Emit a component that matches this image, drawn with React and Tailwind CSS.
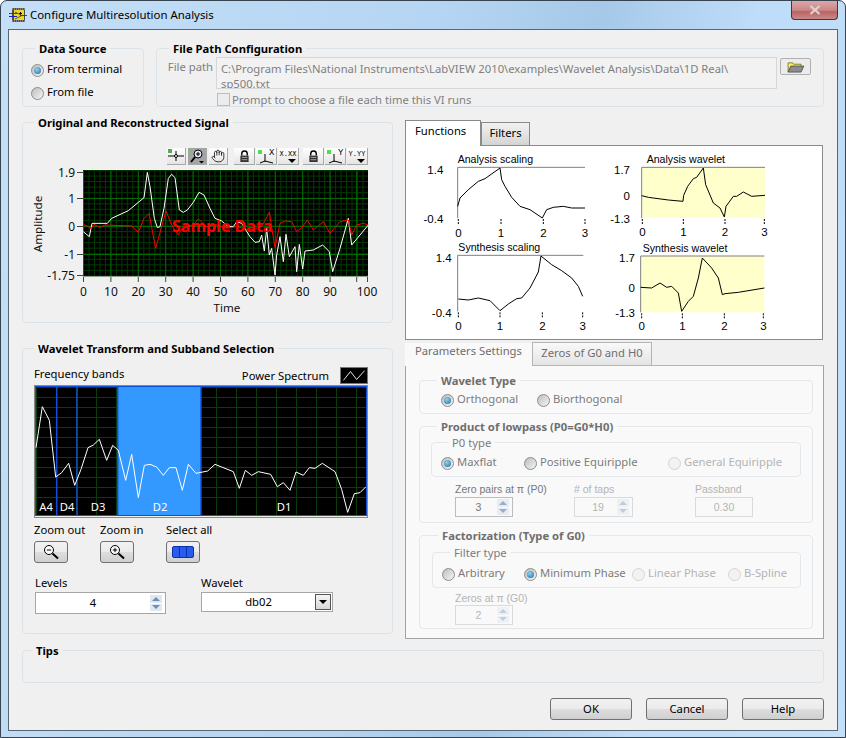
import React from 'react';
import { Hand } from 'lucide-react';

// points were read off the screenshot at 3x, so map them back to page pixels
const mapPts = (ox, oy, arr) => arr.map(([x, y]) => `${ox + x / 3},${oy + y / 3}`).join(' ');

const whiteSig = [[190,350],[208,365],[216,325],[262,325],[275,310],[325,287],[355,262],[372,248],[382,172],[390,215],[403,310],[412,338],[420,335],[432,280],[445,190],[455,178],[465,188],[478,285],[490,292],[502,285],[520,262],[537,232],[552,240],[570,280],[585,310],[605,318],[625,335],[640,335],[650,320],[665,325],[690,365],[705,382],[718,380],[725,360],[733,408],[740,340],[748,420],[755,400],[765,480],[770,420],[780,365],[790,440],[798,358],[808,425],[825,395],[830,470],[838,388],[848,462],[855,408],[880,405],[908,390],[928,410],[938,470],[960,400],[985,310],[995,390],[1045,330]];
const redSig = [[190,328],[205,335],[212,342],[222,328],[240,338],[255,330],[335,333],[355,352],[372,310],[387,295],[407,400],[438,288],[455,330],[475,360],[490,335],[520,330],[535,312],[560,335],[585,328],[620,340],[650,335],[690,345],[725,335],[748,292],[765,398],[780,325],[795,318],[815,320],[830,350],[845,338],[862,315],[880,345],[910,320],[930,355],[960,320],[985,315],[995,360],[1010,330],[1030,325],[1045,330]];
const spectrum = [[48,320],[67,197],[88,238],[107,408],[125,395],[146,367],[164,433],[183,385],[204,320],[220,312],[238,295],[260,358],[278,313],[295,328],[317,418],[335,340],[355,470],[373,373],[390,370],[410,378],[430,403],[448,380],[468,380],[487,448],[505,370],[528,397],[563,390],[585,370],[605,378],[640,392],[658,442],[676,388],[695,403],[715,392],[752,400],[772,437],[790,425],[810,448],[828,393],[850,403],[868,380],[885,382],[907,367],[945,392],[965,445],[983,514],[1003,458],[1020,455],[1037,438]];

const miniCharts = [
  { title: 'Analysis scaling', tx: 158, ty: 123, vx: 406, vy: 146, px: [158, 540], py: [148, 300], fill: 'none', yEnd: 115, yl: [['1.4', 153], ['-0.4', 302]], xl: [160, 288, 415, 540], xly: 343,
    curve: [[158,265],[165,240],[190,215],[220,190],[240,182],[285,150],[290,185],[300,205],[320,238],[345,265],[375,275],[412,300],[425,275],[445,268],[475,265],[500,270],[540,270]] },
  { title: 'Analysis wavelet', tx: 725, ty: 123, vx: 614, vy: 146, px: [710, 1080], py: [148, 300], fill: '#ffffcc', yEnd: 675, yl: [['1.7', 153], ['0', 233], ['-1.3', 302]], xl: [712, 835, 960, 1078], xly: 340,
    curve: [[710,233],[730,238],[790,246],[834,250],[836,232],[848,205],[865,182],[875,178],[895,150],[902,200],[925,255],[945,270],[958,297],[963,265],[985,235],[995,235],[1015,222],[1040,235],[1080,232]] },
  { title: 'Synthesis scaling', tx: 160, ty: 388, vx: 406, vy: 242, px: [158, 535], py: [412, 580], fill: 'none', yEnd: 140, yl: [['1.4', 418], ['-0.4', 582]], xl: [160, 285, 412, 533], xly: 622,
    curve: [[160,543],[190,546],[220,540],[255,548],[285,578],[310,558],[335,542],[350,540],[375,510],[400,462],[408,414],[440,440],[470,458],[500,480],[520,505],[533,535]] },
  { title: 'Synthesis wavelet', tx: 713, ty: 390, vx: 614, vy: 242, px: [707, 1078], py: [414, 583], fill: '#ffffcc', yEnd: 690, yl: [['1.7', 418], ['0', 508], ['-1.3', 583]], xl: [710, 832, 958, 1075], xly: 622,
    curve: [[707,508],[740,510],[765,495],[785,508],[800,505],[820,525],[830,580],[850,550],[865,535],[880,480],[892,420],[920,450],[940,480],[952,530],[960,527],[1000,523],[1078,510]] },
];

const MiniChart = ({ c }) => {
  const zx = (x) => 405 + x / 3;
  const zy = (y) => 118 + y / 3;
  return (
    <svg viewBox={`${c.vx} ${c.vy} 208 96`} className="block w-[208px] h-[96px] overflow-visible font-['Liberation_Sans',sans-serif]">
      <rect x={zx(c.px[0])} y={zy(c.py[0])} width={(c.px[1] - c.px[0]) / 3} height={(c.py[1] - c.py[0]) / 3} fill={c.fill} />
      <path d={`M${zx(c.px[0])} ${zy(c.py[1])}V${zy(c.py[0])}H${zx(c.px[1])}`} fill="none" stroke="#808080" />
      <text x={zx(c.tx)} y={zy(c.ty) + 4} fontSize="10.6" fill="#000">{c.title}</text>
      {c.yl.map(([t, y]) => (
        <text key={t} x={zx(c.yEnd)} y={zy(y) + 4.5} fontSize="11.5" textAnchor="end" fill="#000">{t}</text>
      ))}
      {c.xl.map((x, i) => (
        <g key={x}>
          <path d={`M${zx(x)} ${zy(c.py[1]) + 1}v5`} stroke="#000" strokeDasharray="2 1" />
          <text x={zx(x)} y={zy(c.xly) + 4.5} fontSize="11.5" textAnchor="middle" fill="#000">{i}</text>
        </g>
      ))}
      <polyline points={mapPts(405, 118, c.curve)} fill="none" stroke="#000" />
    </svg>
  );
};

const SignalGraph = () => {
  const xs = Array.from({ length: 10 }, (_, i) => 83.5 + i * 27.4);
  const gridX = [...xs, 356.7];
  const minorX = Array.from({ length: 52 }, (_, i) => 83.5 + i * 5.48);
  const minorY = Array.from({ length: 20 }, (_, i) => 170.5 + i * 5.55);
  const majorY = [198.5, 226.5, 254.5];
  const yLabels = [['1.9', 172], ['1', 198], ['0', 226], ['-1', 254], ['-1.75', 275]];
  return (
    <svg viewBox="24 168 366 150" className="block w-[366px] h-[150px] overflow-visible">
      <rect x="83" y="171" width="285" height="105" fill="#000" />
      {minorX.map((x) => <path key={x} d={`M${x} 171V276`} stroke="#003c00" />)}
      {minorY.map((y) => <path key={y} d={`M83 ${y}H368`} stroke="#003c00" />)}
      {gridX.map((x) => <path key={x} d={`M${x} 171V276`} stroke="#006c00" />)}
      {majorY.map((y) => <path key={y} d={`M83 ${y}H368`} stroke="#006c00" />)}
      <polyline points={mapPts(20, 115, whiteSig)} fill="none" stroke="#fff" />
      <polyline points={mapPts(20, 115, redSig)} fill="none" stroke="#ff0000" />
      <text x="172" y="232" fontSize="16" fontWeight="700" fill="#ff0000">Sample Data</text>
      {yLabels.map(([t, y]) => (
        <g key={t}>
          <path d={`M77 ${Math.floor(y) + 0.5}H83`} stroke="#444" />
          <text x="75" y={y + 4.5} fontSize="12" textAnchor="end" fill="#111">{t}</text>
        </g>
      ))}
      {xs.map((x, i) => (
        <g key={x}>
          <path d={`M${x} 277v5`} stroke="#444" />
          <text x={x} y="296" fontSize="12" textAnchor="middle" fill="#111">{i * 10}</text>
        </g>
      ))}
      <path d="M356.7 277v5M367.5 277v5" stroke="#444" />
      <text x="367" y="296" fontSize="12" textAnchor="middle" fill="#111">100</text>
      <text x="227" y="312" fontSize="11.6" textAnchor="middle" fill="#111">Time</text>
      <text transform="translate(42 224) rotate(-90)" fontSize="11.6" textAnchor="middle" fill="#111">Amplitude</text>
    </svg>
  );
};

const BandsGraph = () => {
  const vLines = Array.from({ length: 17 }, (_, i) => 36.5 + i * 20);
  const hLines = Array.from({ length: 12 }, (_, i) => 386.5 + i * 10);
  const bandLines = [56.7, 77, 117.7, 201];
  const labels = [['A4', 46], ['D4', 67], ['D3', 98], ['D2', 160], ['D1', 284]];
  return (
    <svg viewBox="34 384 334 133" className="block w-[334px] h-[133px] font-['Noto_Sans',sans-serif]">
      <rect x="34.5" y="384.5" width="333" height="132" fill="none" stroke="#8a8a8a" />
      <rect x="36" y="386" width="330" height="128" fill="#000" />
      {vLines.map((x) => <path key={x} d={`M${x} 386V514`} stroke="#0b3d0b" />)}
      {hLines.map((y) => <path key={y} d={`M36 ${y}H366`} stroke="#0b3d0b" />)}
      <rect x="117.7" y="386" width="83.3" height="128" fill="#3399ff" />
      {bandLines.map((x) => <path key={x} d={`M${x} 386V514`} stroke="#0f4fd8" strokeWidth="1.5" />)}
      <rect x="35.5" y="385.5" width="331" height="129" fill="none" stroke="#0f4fd8" />
      <polyline points={mapPts(20, 340, spectrum)} fill="none" stroke="#fff" />
      {labels.map(([t, x]) => (
        <text key={t} x={x} y="510" fontSize="11.25" textAnchor="middle" fill="#fff">{t}</text>
      ))}
    </svg>
  );
};

const GroupBox = ({ title, bold = true, bg = 'bg-[#f0f0f0]', color = 'text-[#000]', border = 'border-[#dbe3e9]', legendLeft = 'ml-[11px]', className = '', children }) => (
  <div className={`border rounded-[4px] ${border} ${className}`}>
    <div className={`-mt-[8px] w-fit px-[4px] leading-[16px] ${legendLeft} ${bg} ${color} ${bold ? 'font-bold' : ''}`}>{title}</div>
    {children}
  </div>
);

const Radio = ({ on = false, faded = false }) => (
  <span className={`shrink-0 mt-[3px] w-[13px] h-[13px] rounded-full border flex items-center justify-center ${faded ? 'border-[#d4d4d4] bg-[#f2f2f2]' : 'border-[#8c8c8c] bg-[linear-gradient(135deg,#bdbdbd,#f5f5f5)]'}`}>
    {on && <span className="w-[7px] h-[7px] rounded-full bg-[radial-gradient(circle_at_40%_35%,#8fd4ee,#1b6aa5)]" />}
  </span>
);

const RadioItem = ({ label, on, faded, color = 'text-[#000]', width = '' }) => (
  <div className={`flex items-start gap-[3px] ${width}`}>
    <Radio on={on} faded={faded} />
    <span className={`leading-[16px] whitespace-nowrap ${color}`}>{label}</span>
  </div>
);

const SpinArrows = ({ fade = '' }) => (
  <div className={`w-[12px] h-[16px] flex flex-col gap-[1px] ${fade}`}>
    <div className="flex-1 flex items-center justify-center bg-[#dfe7ef]">
      <span className="w-0 h-0 border-x-[4px] border-x-transparent border-b-[4px] border-b-[#6f8db5]" />
    </div>
    <div className="flex-1 flex items-center justify-center bg-[#dfe7ef]">
      <span className="w-0 h-0 border-x-[4px] border-x-transparent border-t-[4px] border-t-[#6f8db5]" />
    </div>
  </div>
);

const DisabledSpin = ({ value, width, faded = false }) => (
  <div className={`h-[20px] flex items-center border ${width} ${faded ? 'border-[#dadada] text-[#b5b5b5]' : 'border-[#bdbdbd] text-[#777]'}`}>
    <span className="flex-1 text-center pl-[4px]">{value}</span>
    <div className="pr-[3px]"><SpinArrows fade={faded ? 'opacity-40' : 'opacity-70'} /></div>
  </div>
);

const MagnifierIcon = ({ sign }) => (
  <svg viewBox="0 0 18 18" className="w-[18px] h-[18px]">
    <circle cx="7" cy="7" r="4.5" fill="#fff" stroke="#000" />
    <path d="M10.5 10.5l5.5 5" stroke="#000" strokeWidth="2" />
    <path d="M4.8 7h4.4" stroke="#000" />
    {sign === 'plus' && <path d="M7 4.8v4.4" stroke="#000" />}
  </svg>
);

const AeroButton = ({ children }) => (
  <button className="w-[34px] h-[22px] flex items-center justify-center border border-[#707070] rounded-[3px] bg-[linear-gradient(#f2f2f2_0%,#ebebeb_48%,#dddddd_52%,#cfcfcf_100%)]">
    {children}
  </button>
);

const DialogButton = ({ label }) => (
  <button className="w-[82px] h-[22px] border border-[#707070] rounded-[3px] leading-[20px] text-center text-[#000] bg-[linear-gradient(#f2f2f2_0%,#ebebeb_48%,#dddddd_52%,#cfcfcf_100%)]">
    {label}
  </button>
);

const ToolBtn = ({ children, active = false, width = 'w-[21px]' }) => (
  <div className={`h-[17px] flex items-center justify-center border-b border-r border-[#a8a8a8] ${width} ${active ? 'bg-[#a4a4a4]' : 'bg-[linear-gradient(#ffffff,#e4e4e4)]'}`}>
    {children}
  </div>
);

const LockIcon = () => (
  <svg viewBox="0 0 12 14" className="w-[11px] h-[13px]">
    <path d="M3 6V4a3 3 0 0 1 6 0v2" fill="none" stroke="#000" strokeWidth="1.5" />
    <rect x="1.5" y="6" width="9" height="7" fill="#333" />
    <path d="M3 8h6M3 10.500h6" stroke="#aaa" />
  </svg>
);

const AxisIcon = ({ letter }) => (
  <div className="relative w-[19px] h-[15px]">
    <svg viewBox="0 0 19 15" className="w-[19px] h-[15px]">
      <rect x="1" y="1" width="4" height="4" fill="#4fdc4f" />
      <path d="M8 5v8M3 14l5-2 8 2" fill="none" stroke="#000" />
    </svg>
    <span className="absolute right-[1px] -top-[1px] text-[9px] leading-[10px] font-['Liberation_Mono',monospace]">{letter}</span>
  </div>
);

const FormatIcon = ({ text }) => (
  <div className="flex flex-col items-end">
    <span className="text-[7px] leading-[9px] font-['Liberation_Mono',monospace]">{text}</span>
    <span className="w-0 h-0 border-x-[4px] border-x-transparent border-t-[4px] border-t-[#000]" />
  </div>
);

const Toolbar = () => (
  <div className="flex justify-end pr-[24px] mt-[17px] h-[20px]">
    <div className="flex gap-[2px] mr-[6px]">
      <ToolBtn width="w-[19px]">
        <svg viewBox="0 0 18 14" className="w-[18px] h-[14px]">
          <path d="M1 7h16M9 2v10" stroke="#000" />
          <circle cx="9" cy="7" r="1.5" fill="#fff" stroke="#000" />
          <rect x="1" y="0" width="4" height="4" fill="#58a858" />
        </svg>
      </ToolBtn>
      <ToolBtn width="w-[19px]" active>
        <svg viewBox="0 0 18 16" className="w-[18px] h-[16px]">
          <rect x="1" y="1" width="3" height="3" fill="#4fdc4f" />
          <circle cx="10" cy="6" r="4" fill="#dce6f0" stroke="#000" />
          <path d="M8 6h4M10 4v4" stroke="#000" />
          <path d="M7 9l-4 5" stroke="#000" strokeWidth="2" />
          <path d="M11 13h5l-2.500 2.500z" fill="#000" />
        </svg>
      </ToolBtn>
      <ToolBtn width="w-[19px]"><Hand size={14} strokeWidth={1.4} color="#111" /></ToolBtn>
    </div>
    <div className="flex gap-[1px] mr-[4px]">
      <ToolBtn><LockIcon /></ToolBtn>
      <ToolBtn><AxisIcon letter="X" /></ToolBtn>
      <ToolBtn><FormatIcon text="X.XX" /></ToolBtn>
    </div>
    <div className="flex gap-[1px]">
      <ToolBtn><LockIcon /></ToolBtn>
      <ToolBtn><AxisIcon letter="Y" /></ToolBtn>
      <ToolBtn><FormatIcon text="Y.YY" /></ToolBtn>
    </div>
  </div>
);

const TitleBar = () => (
  <div className="h-[28px] shrink-0 flex items-start">
    <svg viewBox="0 0 18 16" className="w-[18px] h-[16px] mt-[6px] ml-[1px]">
      <rect x="3" y="1" width="13" height="14" fill="#4c4c4c" />
      <path d="M3 2h13M3 14h13" stroke="#b8b8b8" strokeDasharray="1 1" />
      <rect x="5" y="3" width="10" height="10" fill="#ecd62c" />
      <path d="M10 6.500h3M11.500 5v3" stroke="#000" />
      <path d="M6 5l7 3.500-7 3.500" fill="none" stroke="#6b5a10" />
      <path d="M0 6.500h8M11 8.500h7" stroke="#e00000" />
      <path d="M0 9.500h8" stroke="#1c1cc8" />
    </svg>
    <span className="ml-[3px] mt-[6px] leading-[16px] text-[11.4px] text-[#000]">Configure Multiresolution Analysis</span>
    <div className="ml-auto w-[47px] h-[19px] flex items-center justify-center rounded-b-[4px] border border-t-0 border-[#4a3436] bg-[linear-gradient(#d9a8a8_0%,#cd8787_50%,#b96464_60%,#c98a8a_100%)]">
      <svg viewBox="0 0 12 10" className="w-[12px] h-[10px]">
        <path d="M1.500 1l9 8M10.500 1l-9 8" stroke="#dfd3d0" strokeWidth="2.200" />
      </svg>
    </div>
  </div>
);

const DataSourceRow = () => (
  <div className="flex gap-[12px]">
    <GroupBox title="Data Source" className="w-[122px] h-[59px]" legendLeft="ml-[12px]">
      <div className="pl-[8px] pt-[4px] flex flex-col gap-[7px]">
        <RadioItem label="From terminal" on />
        <RadioItem label="From file" />
      </div>
    </GroupBox>
    <GroupBox title="File Path Configuration" className="w-[668px] h-[59px]" legendLeft="ml-[12px]">
      <div className="flex items-start">
        <span className="w-[56px] text-right leading-[16px] mt-[2px] text-[#808080]">File path</span>
        <div className="ml-[3px] w-[561px] h-[32px] border border-[#d6d6d6] bg-[#f2f2f2] overflow-hidden pl-[4px] leading-[15px] pt-[3px] text-[#808080]">
          C:\Program Files\National Instruments\LabVIEW 2010\examples\Wavelet Analysis\Data\1D Real\<br />sp500.txt
        </div>
        <button className="ml-[3px] mt-[1px] w-[31px] h-[17px] flex items-center justify-center border border-[#b0b0b0] rounded-[2px] bg-[#ececec]">
          <svg viewBox="0 0 20 13" className="w-[19px] h-[12px]">
            <path d="M2 12V2h5l1 1.500h8V6H5z" fill="#fbf35a" stroke="#7a7a30" />
            <path d="M2 12L5 5.500h14L16 12z" fill="#8d8d8d" stroke="#555" />
          </svg>
        </button>
      </div>
      <div className="flex items-center mt-[3px] ml-[60px] gap-[2px]">
        <span className="w-[13px] h-[13px] border border-[#bcbcbc] bg-[#ececec]" />
        <span className="leading-[15px] text-[#808080]">Prompt to choose a file each time this VI runs</span>
      </div>
    </GroupBox>
  </div>
);

const LeftColumn = () => (
  <div className="w-[371px] pt-[3px]">
    <GroupBox title="Original and Reconstructed Signal" className="h-[201px]" legendLeft="ml-[11px]">
      <Toolbar />
      <div className="ml-[1px]"><SignalGraph /></div>
    </GroupBox>
    <GroupBox title="Wavelet Transform and Subband Selection" className="h-[286px] mt-[25px]" legendLeft="ml-[11px]">
      <div className="flex items-end pl-[11px] pr-[24px] mt-[1px] h-[26px]">
        <span className="leading-[16px] mb-[2px] text-[#000]">Frequency bands</span>
        <span className="ml-auto leading-[16px] text-[#000]">Power Spectrum</span>
        <div className="ml-[11px] w-[28px] h-[17px] bg-[#000] border border-[#777]">
          <svg viewBox="0 0 28 17" className="w-full h-full"><path d="M2 14l8-10 7 9 9-10" fill="none" stroke="#fff" /></svg>
        </div>
      </div>
      <div className="ml-[11px] mt-[1px]"><BandsGraph /></div>
      <div className="flex mt-[4px] pl-[11px]">
        <div className="w-[66px]">
          <div className="leading-[16px]">Zoom out</div>
          <div className="mt-[3px]"><AeroButton><MagnifierIcon sign="minus" /></AeroButton></div>
        </div>
        <div className="w-[66px]">
          <div className="leading-[16px]">Zoom in</div>
          <div className="mt-[3px]"><AeroButton><MagnifierIcon sign="plus" /></AeroButton></div>
        </div>
        <div className="w-[66px]">
          <div className="leading-[16px]">Select all</div>
          <div className="mt-[3px]">
            <AeroButton>
              <span className="w-[22px] h-[12px] rounded-[2px] border border-[#0a2fa8] bg-[#2a5cf0] flex justify-evenly">
                <span className="w-[1px] h-full bg-[#0a2fa8]" />
                <span className="w-[1px] h-full bg-[#0a2fa8]" />
              </span>
            </AeroButton>
          </div>
        </div>
      </div>
      <div className="flex mt-[12px] pl-[12px]">
        <div className="w-[166px]">
          <div className="leading-[16px]">Levels</div>
          <div className="mt-[1px] w-[131px] h-[22px] flex items-center bg-[#fff] border border-[#a6a6a6]">
            <span className="flex-1 text-center">4</span>
            <div className="pr-[3px]"><SpinArrows /></div>
          </div>
        </div>
        <div>
          <div className="leading-[16px]">Wavelet</div>
          <div className="mt-[1px] w-[132px] h-[20px] flex items-center bg-[#fff] border border-[#a6a6a6]">
            <span className="flex-1 text-center">db02</span>
            <span className="mr-[1px] w-[16px] h-[16px] flex items-center justify-center border border-[#555] bg-[linear-gradient(#f4f4f4,#d8d8d8)]">
              <span className="w-0 h-0 border-x-[4px] border-x-transparent border-t-[4px] border-t-[#000]" />
            </span>
          </div>
        </div>
      </div>
    </GroupBox>
  </div>
);

const FunctionsPanel = () => (
  <div>
    <div className="flex items-end h-[26px]">
      <div className="w-[76px] h-[26px] -mb-[1px] z-10 bg-[#fff] border border-b-0 border-[#8a8a8a] pl-[9px] pt-[2px] leading-[16px]">Functions</div>
      <div className="w-[49px] h-[23px] bg-[linear-gradient(#f2f2f2,#d4d4d4)] border border-b-0 border-[#8a8a8a] text-center pt-[2px] leading-[16px]">Filters</div>
    </div>
    <div className="w-[418px] h-[195px] border border-[#8a8a8a] bg-[#fff]">
      <div className="grid grid-cols-[208px_208px]">
        {miniCharts.map((c) => <MiniChart key={c.title} c={c} />)}
      </div>
    </div>
  </div>
);

const ParametersPanel = () => {
  const bg = 'bg-[#f9f9f9]';
  const titleColor = 'text-[#6e6e6e]';
  const label = 'text-[#7c7c7c]';
  const faint = 'text-[#b4b4b4]';
  const lines = 'border-[#e3e8ec]';
  return (
    <div className="mt-[2px]">
      <div className="flex items-end h-[23px]">
        <div className="w-[127px] h-[23px] -mb-[1px] z-10 bg-[#f9f9f9] pl-[10px] leading-[16px] text-[#6e6e6e]">Parameters Settings</div>
        <div className="w-[120px] h-[23px] border border-b-0 border-[#b4b4b4] bg-[linear-gradient(#f9f9f9,#e4e4e4)] text-center pt-[2px] leading-[16px] text-[#6e6e6e]">Zeros of G0 and H0</div>
      </div>
      <div className="w-[419px] h-[274px] border border-[#a2a2a2] border-t-[#b4b4b4] bg-[#f9f9f9] pl-[13px] pt-[14px]">
        <GroupBox title="Wavelet Type" bg={bg} color={titleColor} border={lines} className="w-[394px] h-[34px]" legendLeft="ml-[17px]">
          <div className="flex pl-[21px] mt-[2px]">
            <RadioItem label="Orthogonal" on color={label} width="w-[96px]" />
            <RadioItem label="Biorthogonal" color={label} />
          </div>
        </GroupBox>
        <GroupBox title="Product of lowpass (P0=G0*H0)" bg={bg} color={titleColor} border={lines} className="w-[394px] h-[97px] mt-[12px]" legendLeft="ml-[17px]">
          <GroupBox title="P0 type" bold={false} bg={bg} color={label} border={lines} className="w-[370px] h-[35px] ml-[11px] mt-[7px]" legendLeft="ml-[16px]">
            <div className="flex pl-[9px] mt-[3px]">
              <RadioItem label="Maxflat" on color={label} width="w-[83px]" />
              <RadioItem label="Positive Equiripple" color={label} width="w-[144px]" />
              <RadioItem label="General Equiripple" faded color={faint} />
            </div>
          </GroupBox>
          <div className="flex pl-[35px] mt-[5px] text-[10.5px] font-['Liberation_Sans',sans-serif] leading-[14px]">
            <div className="w-[119px]">
              <div className="text-[#777]">Zero pairs at π (P0)</div>
              <div className="mt-[1px]"><DisabledSpin value="3" width="w-[58px]" /></div>
            </div>
            <div className="w-[121px]">
              <div className={faint}># of taps</div>
              <div className="mt-[1px]"><DisabledSpin value="19" width="w-[59px]" faded /></div>
            </div>
            <div>
              <div className={faint}>Passband</div>
              <div className="mt-[1px] w-[58px] h-[20px] border border-[#dadada] text-[#b5b5b5] text-center leading-[18px]">0.30</div>
            </div>
          </div>
        </GroupBox>
        <GroupBox title="Factorization (Type of G0)" bg={bg} color={titleColor} border={lines} className="w-[394px] h-[94px] mt-[12px]" legendLeft="ml-[18px]">
          <GroupBox title="Filter type" bold={false} bg={bg} color={label} border={lines} className="w-[369px] h-[36px] ml-[12px] mt-[8px]" legendLeft="ml-[17px]">
            <div className="flex pl-[9px] mt-[4px]">
              <RadioItem label="Arbitrary" color={label} width="w-[82px]" />
              <RadioItem label="Minimum Phase" on color={label} width="w-[108px]" />
              <RadioItem label="Linear Phase" faded color={faint} width="w-[96px]" />
              <RadioItem label="B-Spline" faded color={faint} />
            </div>
          </GroupBox>
          <div className="pl-[35px] mt-[3px] text-[10.5px] font-['Liberation_Sans',sans-serif] leading-[14px]">
            <div className={faint}>Zeros at π (G0)</div>
            <DisabledSpin value="2" width="w-[58px]" faded />
          </div>
        </GroupBox>
      </div>
    </div>
  );
};

const App = () => (
  <div className="w-[846px] h-[738px] flex flex-col rounded-t-[7px] border border-[#37434e] bg-[linear-gradient(100deg,#c4dff7_0%,#b6d5f2_45%,#a6c9e9_62%,#bfdcf8_78%,#c3e0fa_100%)] px-[7px] pb-[6px] text-[11.25px] font-['Noto_Sans',sans-serif] text-[#000] overflow-hidden">
    <TitleBar />
    <div className="flex-1 bg-[#f0f0f0] border border-[#5a6670] px-[13px] pt-[18px]">
      <DataSourceRow />
      <div className="flex gap-[12px] mt-[12px]">
        <LeftColumn />
        <div>
          <FunctionsPanel />
          <ParametersPanel />
        </div>
      </div>
      <GroupBox title="Tips" className="w-[802px] h-[33px] mt-[11px]" legendLeft="ml-[9px]" />
      <div className="w-[802px] flex justify-end gap-[14px] mt-[15px]">
        <DialogButton label="OK" />
        <DialogButton label="Cancel" />
        <DialogButton label="Help" />
      </div>
    </div>
  </div>
);

export default App;
